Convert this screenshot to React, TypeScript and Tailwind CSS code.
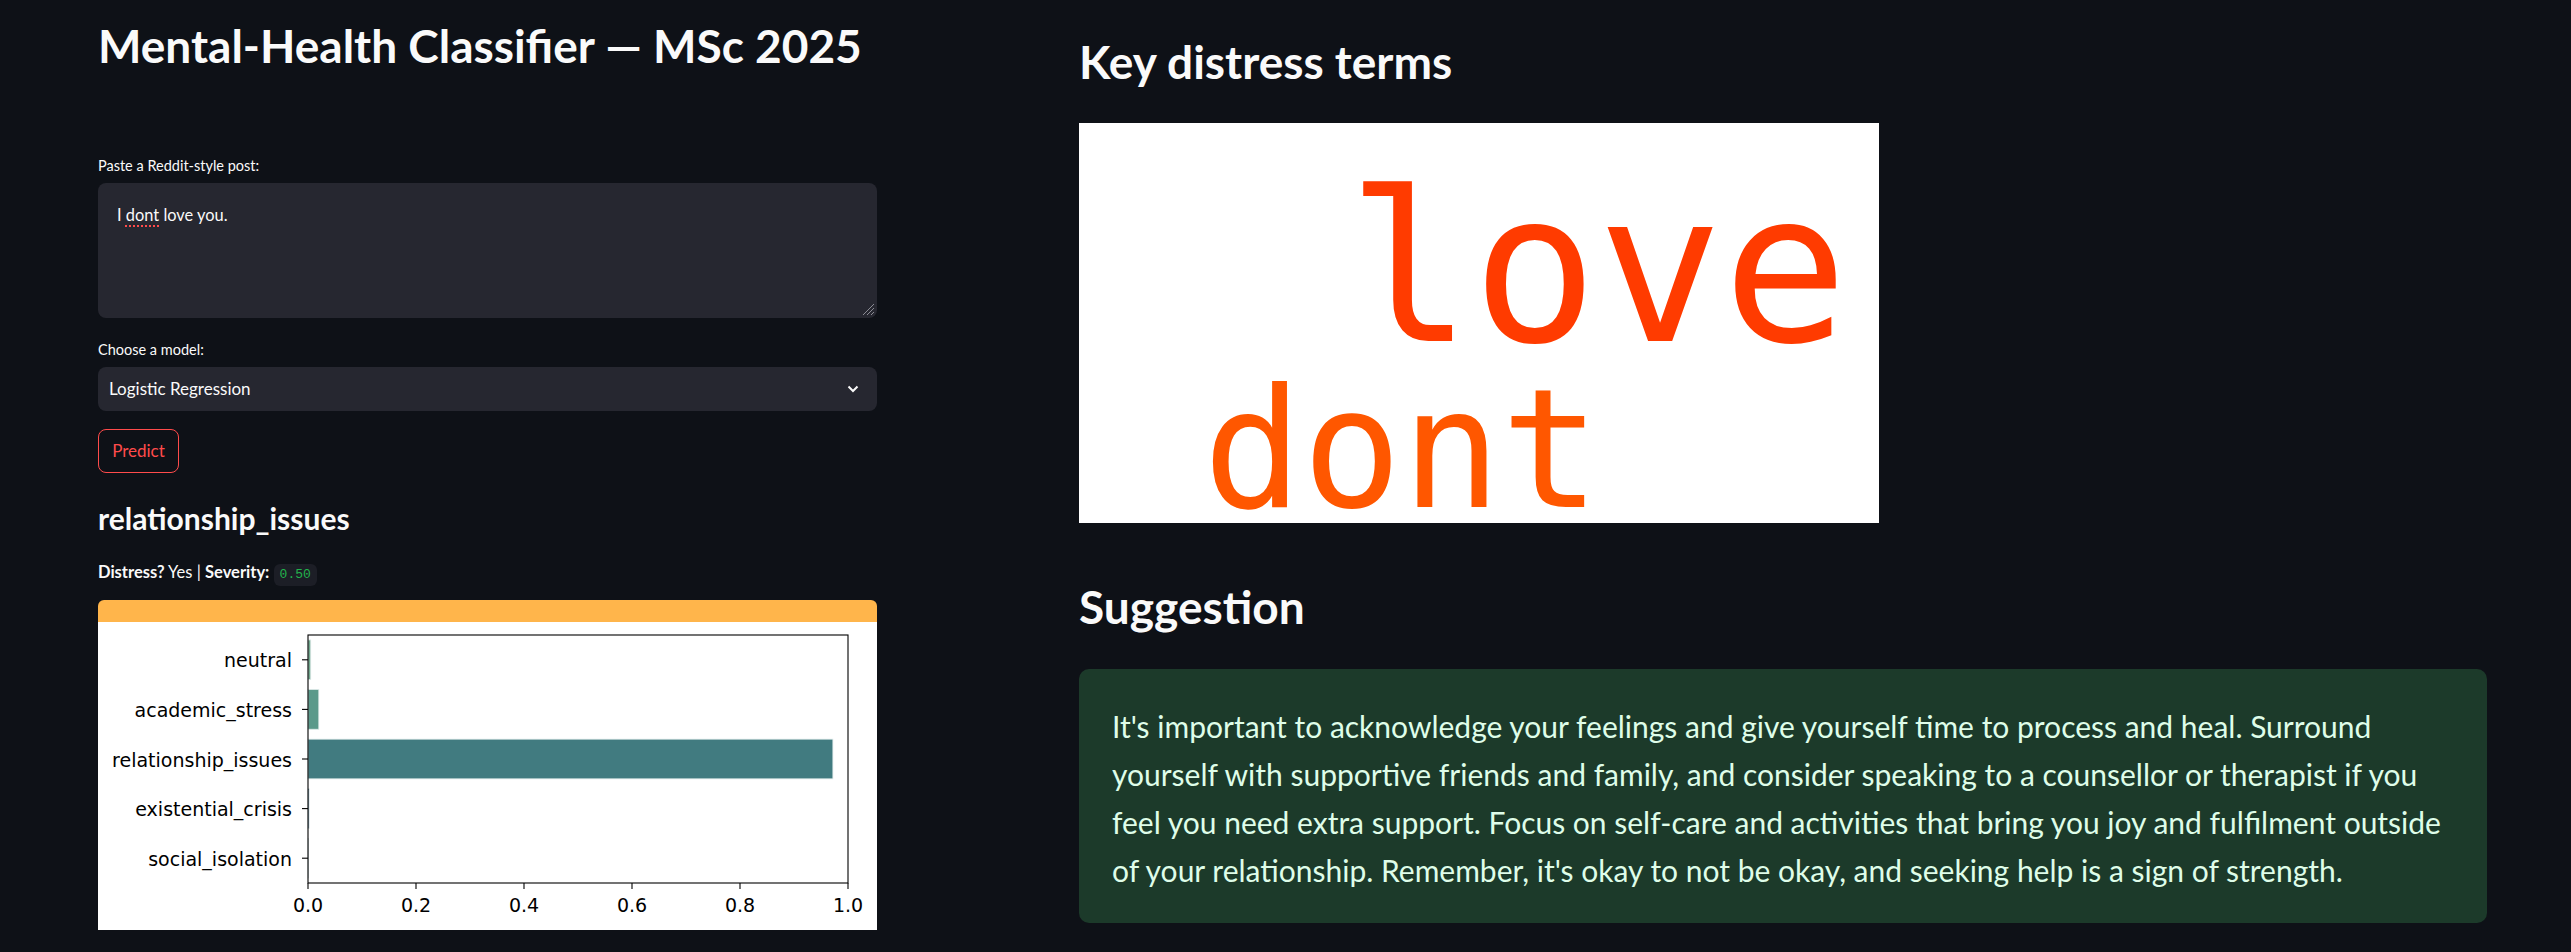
const scores = [
  { label: "neutral", value: 0.005, color: "#70a78c" },
  { label: "academic_stress", value: 0.02, color: "#5a998a" },
  { label: "relationship_issues", value: 0.972, color: "#417b80" },
  { label: "existential_crisis", value: 0.002, color: "#2f5f7c" },
  { label: "social_isolation", value: 0.0005, color: "#2c4475" },
];

function ScoreChart() {
  const x0 = 210;
  const x1 = 750;
  const y0 = 13;
  const y1 = 261;
  const step = (y1 - y0) / scores.length;
  const ticks = [0, 0.2, 0.4, 0.6, 0.8, 1.0];
  return (
    <svg width="779" height="308" className="block bg-white">
      {scores.map((s, i) => {
        const cy = y0 + step * (i + 0.5);
        return (
          <g key={s.label}>
            <rect
              x={x0}
              y={cy - step * 0.4}
              width={(x1 - x0) * s.value}
              height={step * 0.8}
              fill={s.color}
              stroke="#dde9e8"
              strokeWidth="0.8"
            />
            <line x1={x0 - 6} x2={x0} y1={cy} y2={cy} stroke="#000" strokeWidth="1.1" />
            <text x={x0 - 16} y={cy + 7.5} textAnchor="end" fontSize="19" fontFamily="DejaVu Sans" fill="#000">
              {s.label}
            </text>
          </g>
        );
      })}
      <rect x={x0} y={y0} width={x1 - x0} height={y1 - y0} fill="none" stroke="#000" strokeWidth="1.1" />
      {ticks.map((t) => {
        const x = x0 + (x1 - x0) * t;
        return (
          <g key={t}>
            <line x1={x} x2={x} y1={y1} y2={y1 + 6} stroke="#000" strokeWidth="1.1" />
            <text x={x} y={290} textAnchor="middle" fontSize="19" fontFamily="DejaVu Sans" fill="#000">
              {t.toFixed(1)}
            </text>
          </g>
        );
      })}
    </svg>
  );
}

function WordCloud() {
  return (
    <svg width="800" height="400" className="block bg-white">
      <text x="268" y="218" fontSize="208" fontFamily="DejaVu Sans Mono" fill="#ff3b00">
        love
      </text>
      <text x="124" y="384" fontSize="165" fontFamily="DejaVu Sans Mono" fill="#ff5700">
        dont
      </text>
    </svg>
  );
}

export default function App() {
  return (
    <div className="min-h-screen bg-[#0e1117] font-[family-name:Lato,sans-serif] text-[#fafafa]">
      <div className="flex pl-[98px]">
        <div className="w-[779px] shrink-0">
          <h1 className="mt-[18px] text-[46px] font-bold leading-[1.2]">Mental-Health Classifier — MSc 2025</h1>

          <p className="mt-[84px] text-[14.5px] leading-[17px]">Paste a Reddit-style post:</p>
          <div className="relative mt-[9px] h-[135px] rounded-lg bg-[#262730] px-[19px] pt-[22px] text-[16.4px] leading-[20px]">
            I{" "}
            <span className="underline decoration-[#ff4b4b] decoration-dotted decoration-2 underline-offset-[4px]">
              dont
            </span>{" "}
            love you.
            <svg width="14" height="14" viewBox="0 0 14 14" className="absolute bottom-[2px] right-[2px]">
              <path d="M13 2L2 13M13 6L6 13M13 10L10 13" stroke="#8b8c94" strokeWidth="1" />
            </svg>
          </div>

          <p className="mt-[23px] text-[14.5px] leading-[17px]">Choose a model:</p>
          <div className="mt-[9px] flex h-[44px] items-center justify-between rounded-lg bg-[#262730] pl-[11px] pr-[18px] text-[17px]">
            <span>Logistic Regression</span>
            <svg width="12" height="8" viewBox="0 0 12 8">
              <path d="M1.5 1.5L6 6L10.5 1.5" fill="none" stroke="#fafafa" strokeWidth="2" />
            </svg>
          </div>

          <button className="mt-[18px] block h-[44px] w-[81px] rounded-lg border border-[#ff4b4b] text-[17px] text-[#ff4b4b]">
            Predict
          </button>

          <h3 className="mt-[27px] text-[30px] font-bold leading-[1.2]">relationship_issues</h3>
          <div className="mt-[25px] h-[22px] text-[16.5px] leading-[22px]">
            <b>Distress?</b> Yes | <b>Severity:</b>{" "}
            <code className="inline-block rounded-md bg-[#1c1e26] px-[6px] py-[3px] font-[family-name:Liberation_Mono,monospace] text-[13px] leading-[16px] text-[#22b24c]">
              0.50
            </code>
          </div>

          <div className="mt-[17px] h-[22px] rounded-t-md bg-[#ffb54b]" />
          <ScoreChart />
        </div>

        <div className="ml-[202px] w-[1408px] shrink-0">
          <h2 className="mt-[34px] text-[46px] font-bold leading-[1.2]">Key distress terms</h2>
          <div className="mt-[34px]">
            <WordCloud />
          </div>
          <h2 className="mt-[56px] text-[46px] font-bold leading-[1.2]">Suggestion</h2>
          <div className="mt-[35px] rounded-[10px] bg-[#1c3a2a] px-[33px] pb-[29px] pt-[33px] text-[30px] leading-[48px] text-[#dffde9]">
            It's important to acknowledge your feelings and give yourself time to process and heal. Surround
            <br />
            yourself with supportive friends and family, and consider speaking to a counsellor or therapist if you
            <br />
            feel you need extra support. Focus on self-care and activities that bring you joy and fulfilment outside
            <br />
            of your relationship. Remember, it's okay to not be okay, and seeking help is a sign of strength.
          </div>
        </div>
      </div>
    </div>
  );
}
